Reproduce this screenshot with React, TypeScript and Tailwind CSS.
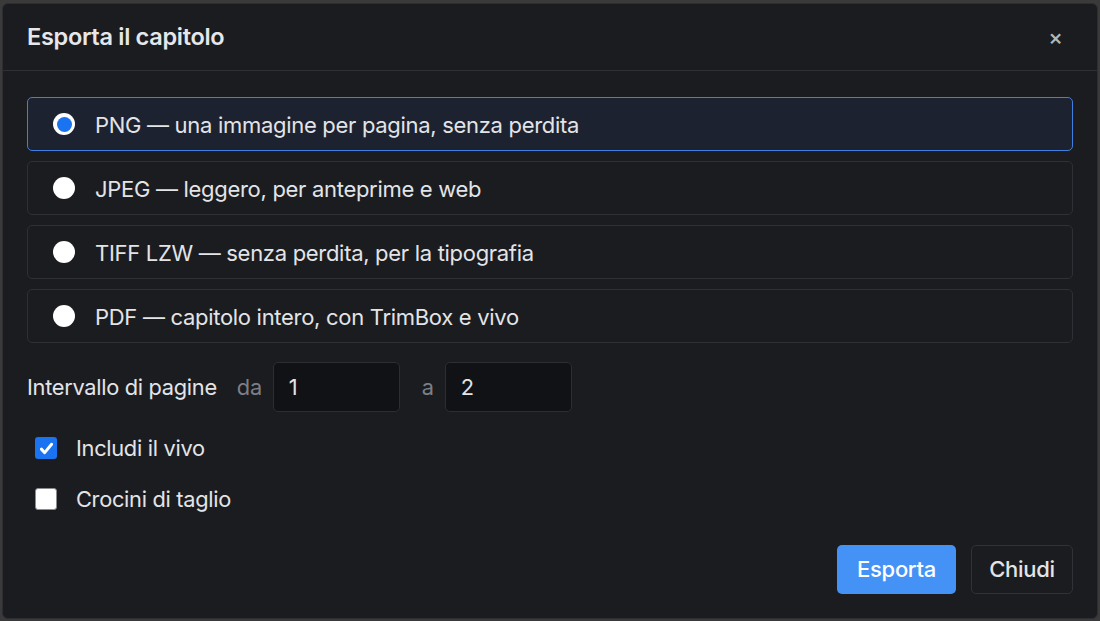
import { useState } from "react";

const formats = [
  { id: "png", label: "PNG — una immagine per pagina, senza perdita" },
  { id: "jpeg", label: "JPEG — leggero, per anteprime e web" },
  { id: "tiff", label: "TIFF LZW — senza perdita, per la tipografia" },
  { id: "pdf", label: "PDF — capitolo intero, con TrimBox e vivo" },
];

function Check({ on }: { on: boolean }) {
  return (
    <span
      className={`flex h-[22px] w-[22px] shrink-0 items-center justify-center rounded-[3px] ${
        on ? "bg-[#1a73f0]" : "border border-[#8a8c90] bg-white"
      }`}
    >
      {on && (
        <svg viewBox="0 0 16 16" className="h-[17px] w-[17px]" fill="none">
          <path d="M3.2 8.6l3.1 3.3L12.8 4" stroke="white" strokeWidth="2.8" strokeLinecap="round" strokeLinejoin="round" />
        </svg>
      )}
    </span>
  );
}

export default function App() {
  const [format, setFormat] = useState("png");
  const [bleed, setBleed] = useState(true);
  const [marks, setMarks] = useState(false);

  return (
    <div
      className="h-[621px] w-[1100px] overflow-hidden bg-[#3a3a3a] pt-[3px] px-[2px] pb-[2px]"
      style={{ fontFamily: "Inter, 'Liberation Sans', sans-serif" }}
    >
      <div className="flex h-full flex-col rounded-[6px] border border-[#2c2e33] bg-[#1b1c20] text-[#e6e7ea]">
        {/* Header */}
        <div className="flex h-[67px] shrink-0 items-center justify-between border-b border-[#2e3035] pl-[24px] pr-[34px]">
          <h2 className="text-[23.5px] font-semibold tracking-[-0.3px]">Esporta il capitolo</h2>
          <button className="text-[22px] font-medium leading-none text-[#b4b6bb]">×</button>
        </div>

        {/* Body */}
        <div className="flex flex-1 flex-col px-[24px] pt-[26px]">
          <div className="flex flex-col gap-[10px]">
            {formats.map((f) => {
              const selected = format === f.id;
              return (
                <label
                  key={f.id}
                  onClick={() => setFormat(f.id)}
                  className={`flex h-[54px] cursor-pointer items-center rounded-[5px] border pl-[25px] ${
                    selected ? "border-[#3f7fe0] bg-[#1d2230]" : "border-[#2e3035] bg-[#1b1c20]"
                  }`}
                >
                  <span className="flex h-[22px] w-[22px] items-center justify-center rounded-full bg-white">
                    {selected && <span className="h-[15px] w-[15px] rounded-full bg-[#1a73f0]" />}
                  </span>
                  <span className="ml-[20px] pt-[2px] text-[22px] tracking-[-0.3px] text-[#e3e4e7]">{f.label}</span>
                </label>
              );
            })}
          </div>

          {/* Page range */}
          <div className="mt-[19px] flex items-center text-[21.8px] tracking-[-0.3px]">
            <span className="text-[#e3e4e7]">Intervallo di pagine</span>
            <span className="ml-[20px] text-[#7d7f85]">da</span>
            <div className="ml-[11px] flex h-[50px] w-[127px] items-center rounded-[5px] border border-[#2c2e33] bg-[#111215] pl-[15px] text-[#e3e4e7]">
              1
            </div>
            <span className="ml-[22px] text-[#7d7f85]">a</span>
            <div className="ml-[11px] flex h-[50px] w-[127px] items-center rounded-[5px] border border-[#2c2e33] bg-[#111215] pl-[15px] text-[#e3e4e7]">
              2
            </div>
          </div>

          {/* Checkboxes */}
          <div className="mt-[23px] flex flex-col gap-[25px] pl-[8px]">
            <label className="flex h-[26px] cursor-pointer items-center" onClick={() => setBleed(!bleed)}>
              <Check on={bleed} />
              <span className="ml-[19px] text-[21.8px] tracking-[-0.3px] text-[#e3e4e7]">Includi il vivo</span>
            </label>
            <label className="flex h-[26px] cursor-pointer items-center" onClick={() => setMarks(!marks)}>
              <Check on={marks} />
              <span className="ml-[19px] text-[21.8px] tracking-[-0.3px] text-[#e3e4e7]">Crocini di taglio</span>
            </label>
          </div>

          {/* Footer */}
          <div className="mt-auto mb-[24px] flex justify-end gap-[15px]">
            <button className="h-[49px] w-[119px] rounded-[5px] bg-[#4592f7] text-[22px] font-medium tracking-[-0.3px] text-white">
              Esporta
            </button>
            <button className="h-[49px] w-[102px] rounded-[5px] border border-[#303238] bg-[#1b1c20] text-[22px] font-medium tracking-[-0.3px] text-[#e3e4e7]">
              Chiudi
            </button>
          </div>
        </div>
      </div>
    </div>
  );
}
